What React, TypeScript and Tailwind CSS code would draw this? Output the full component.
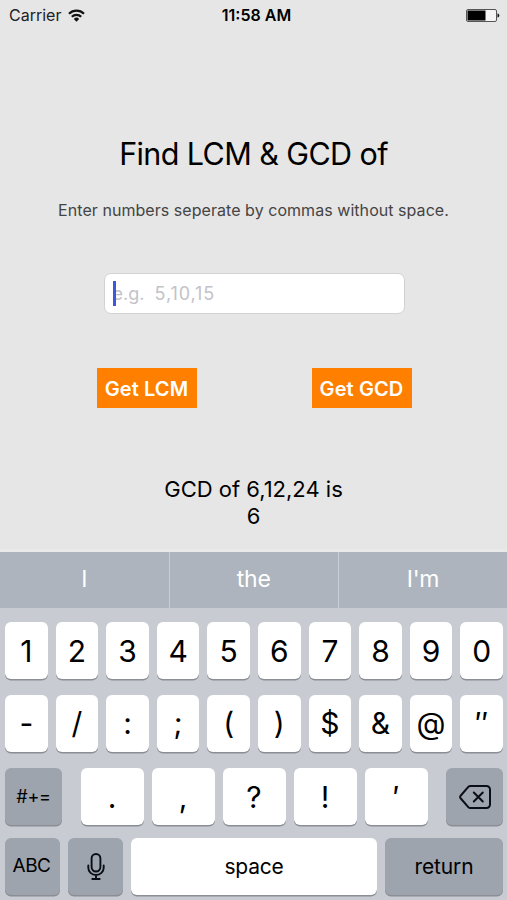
import type { ReactNode } from 'react'
import clsx from 'clsx'

const NUMBER_KEYS = ['1', '2', '3', '4', '5', '6', '7', '8', '9', '0']
const SYMBOL_KEYS = ['-', '/', ':', ';', '(', ')', '$', '&', '@', '″']
const PUNCTUATION_KEYS = ['.', ',', '?', '!', '′']

function Key({ children, dark, className }: { children: ReactNode; dark?: boolean; className?: string }) {
  return (
    <button
      type="button"
      className={clsx(
        'flex h-[57px] items-center justify-center rounded-[6px] text-black shadow-[0_1.5px_0_#8b8e94]',
        dark ? 'bg-[#9ea4ae]' : 'bg-white',
        className,
      )}
    >
      {children}
    </button>
  )
}

function WifiIcon() {
  return (
    <svg width="17" height="13" viewBox="0 0 17 13" fill="none" stroke="#111" strokeWidth="2.2">
      <path d="M1 4.800a10.600 10.600 0 0 1 15 0" />
      <path d="M3.800 7.800a6.600 6.600 0 0 1 9.400 0" />
      <path d="M8.500 12.700 5.800 9.900a3.800 3.800 0 0 1 5.400 0Z" fill="#111" stroke="none" />
    </svg>
  )
}

function BatteryIcon() {
  return (
    <svg width="34" height="13" viewBox="0 0 34 13">
      <rect x="0.5" y="0.5" width="30" height="12" rx="1.5" fill="#f4f4f4" stroke="#555" />
      <rect x="1.5" y="1.5" width="18" height="10" fill="#000" />
      <path d="M31.500 4.500h.5c1 .6 1.300 1.200 1.300 2s-.3 1.400-1.300 2h-.5Z" fill="#111" />
    </svg>
  )
}

function MicIcon() {
  return (
    <svg width="18" height="28" viewBox="0 0 18 28" fill="none" stroke="#0b0e14" strokeWidth="1.9" strokeLinecap="round">
      <rect x="4.600" y="1" width="8.800" height="17.500" rx="4.400" />
      <path d="M1.300 12.500v2.200a7.700 7.300 0 0 0 15.400 0v-2.200M9 22V26M5.300 26h7.400" />
    </svg>
  )
}

function DeleteIcon() {
  return (
    <svg width="32" height="24" viewBox="0 0 32 24" fill="none" stroke="#0b0e14" strokeWidth="2" strokeLinejoin="round" strokeLinecap="round">
      <path d="M11.500 1H27.500a3.500 3.500 0 0 1 3.500 3.500v15a3.500 3.500 0 0 1-3.500 3.500H11.500a3 3 0 0 1-2.200-.9L1.800 13.500a2 2 0 0 1 0-3L9.300 1.900A3 3 0 0 1 11.500 1Z" />
      <path d="m14.800 7.500 9 9m0-9-9 9" />
    </svg>
  )
}

function StatusBar() {
  return (
    <header className="grid h-[30px] grid-cols-3 items-center pl-[9px] pr-[7px] text-[16px] text-[#222]">
      <div className="flex items-center gap-[7px]">
        <span>Carrier</span>
        <WifiIcon />
      </div>
      <span className="pl-1 text-center font-semibold text-black">11:58 AM</span>
      <div className="flex justify-end"><BatteryIcon /></div>
    </header>
  )
}

function Keyboard() {
  return (
    <section className="flex-1 bg-[#c8cbd2]">
      <div className="grid h-[56px] grid-cols-[169.5px_169.5px_1fr] divide-x divide-[#c9ced6] bg-[#adb4bd] text-[23px] text-white">
        {['I', 'the', "I'm"].map(word => (
          <div key={word} className="flex items-center justify-center pb-0.5 tracking-[-0.2px]">{word}</div>
        ))}
      </div>
      <div className="pl-[5px] pr-1 pt-[14px]">
        <div className="grid grid-cols-10 gap-[8px] text-[30px]">
          {NUMBER_KEYS.map(k => <Key key={k} className="pt-0.5">{k}</Key>)}
        </div>
        <div className="mt-4 grid grid-cols-10 gap-[8px] text-[30px]">
          {SYMBOL_KEYS.map(k => <Key key={k}>{k}</Key>)}
        </div>
        <div className="mt-4 flex">
          <Key dark className="w-[57px] text-[18px] tracking-[-0.2px]">#+=</Key>
          <div className="ml-[18.5px] flex gap-[8px] text-[30px]">
            {PUNCTUATION_KEYS.map(k => <Key key={k} className="w-[63px] pt-0.5">{k}</Key>)}
          </div>
          <Key dark className="ml-auto w-[57px]"><DeleteIcon /></Key>
        </div>
        <div className="mt-[13px] flex gap-[8px] text-[21px]">
          <Key dark className="w-[55px] pr-0.5 text-[19px] tracking-[-0.5px]">ABC</Key>
          <Key dark className="w-[55px]"><MicIcon /></Key>
          <Key className="flex-1 tracking-[-0.2px]">space</Key>
          <Key dark className="w-[118px] tracking-[-0.1px]">return</Key>
        </div>
      </div>
    </section>
  )
}

export default function App() {
  return (
    <div className="flex h-[900px] w-[507px] flex-col overflow-hidden bg-[#e6e6e6] font-['Inter',sans-serif] text-black">
      <StatusBar />
      <main className="flex h-[522px] flex-col items-center border-b-[3px] border-[#e9e9e9]">
        <h1 className="mt-[104px] text-[30.5px] leading-[40px] tracking-[-0.6px]">Find LCM &amp; GCD of</h1>
        <p className="mt-[26px] text-[16px] leading-5 tracking-[0.05px] text-[#444]">Enter numbers seperate by commas without space.</p>
        <div className="ml-px mt-[53px] flex h-[41px] w-[301px] items-center rounded-[7px] border border-[#d2d2d2] bg-white pl-[8px] text-[18px] text-[#c3c3c8]">
          <span className="z-10 h-[25px] w-[3px] bg-[#3f57dd]" />
          <span className="-ml-[3px] whitespace-pre">e.g.  <span className="tracking-[0.9px]">5,10,15</span></span>
        </div>
        <div className="ml-px mt-[54px] flex w-[315px] justify-between text-[20px] font-semibold text-white">
          <button type="button" className="h-10 w-[100px] bg-[#ff8000] pt-px tracking-[0.1px]">Get LCM</button>
          <button type="button" className="h-10 w-[100px] bg-[#ff8000] pt-px tracking-[0.1px]">Get GCD</button>
        </div>
        <p className="mt-[68px] text-center text-[22px] leading-[27px]">GCD of 6,12,24 is<br />6</p>
      </main>
      <Keyboard />
    </div>
  )
}
